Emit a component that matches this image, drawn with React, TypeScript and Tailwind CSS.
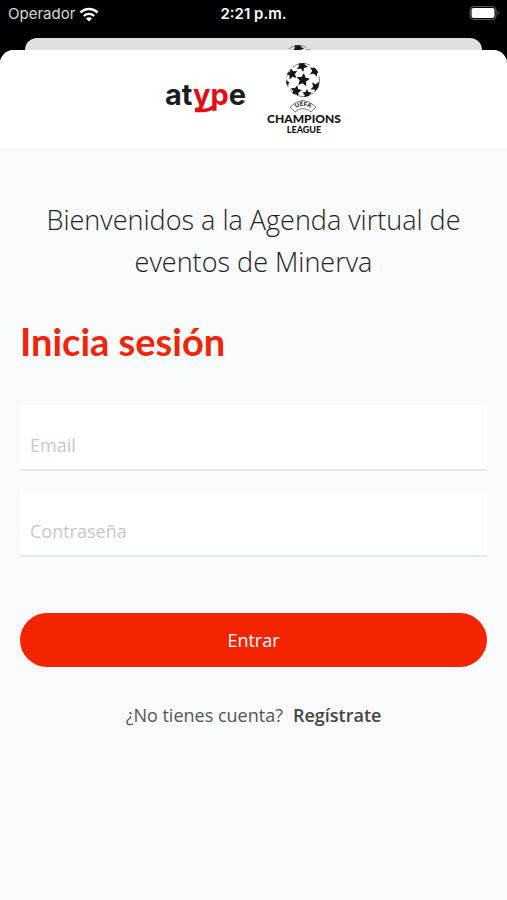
import type { InputHTMLAttributes } from "react";

const STARS: [number, number, number, number][] = [
  [20, 22, 7, 8],
  [19, 8, 6, 25],
  [32, 13, 6, 20],
  [33, 29, 6, 30],
  [24, 36, 5, 0],
  [13, 33, 6, 12],
  [9, 16, 6, -12],
  [4, 25, 3, 0],
];

function starPoints(cx: number, cy: number, r: number, turn: number) {
  return Array.from({ length: 10 }, (_, i) => {
    const radius = i % 2 === 0 ? r : r * 0.48;
    const angle = ((i * 36 - 90 + turn) * Math.PI) / 180;
    return `${(cx + radius * Math.cos(angle)).toFixed(2)},${(cy + radius * Math.sin(angle)).toFixed(2)}`;
  }).join(" ");
}

function StarBall({ clip }: { clip: string }) {
  return (
    <g fill="#161616">
      <clipPath id={clip}>
        <circle cx="20" cy="22" r="17" />
      </clipPath>
      <circle cx="20" cy="22" r="16.5" fill="none" stroke="#777" strokeWidth="0.9" strokeDasharray="8 3" />
      <g clipPath={`url(#${clip})`}>
        {STARS.map(([x, y, r, t]) => (
          <polygon key={`${x}-${y}`} points={starPoints(x, y, r, t)} />
        ))}
      </g>
    </g>
  );
}

function AtypeLogo() {
  return (
    <svg viewBox="0 0 84 50" className="h-[50px] w-[84px] overflow-visible" role="img" aria-label="atype">
      <text x="2" y="34" fontFamily="Inter, sans-serif" fontWeight="700" fontSize="29" fill="#1a1d22">
        at<tspan fill="#e60a14">yp</tspan>e
      </text>
      <path d="M32 39.5h7q8 0 11-4" fill="none" stroke="#e60a14" strokeWidth="3.5" />
    </svg>
  );
}

function ChampionsLogo() {
  return (
    <svg viewBox="0 0 80 80" className="size-20" role="img" aria-label="UEFA Champions League">
      <g transform="translate(18 -1)">
        <StarBall clip="ball-front" />
      </g>
      <path d="M25 48Q38 35 51 48L46 53Q38 46 30 53Z" fill="none" stroke="#444" strokeWidth="0.7" />
      <path id="uefa-arc" d="M27 52Q38 42 49 52" fill="none" />
      <g fill="#161616" fontFamily="Lato, sans-serif" fontWeight="900" textAnchor="middle">
        <text fontSize="6">
          <textPath href="#uefa-arc" startOffset="50%">UEFA</textPath>
        </text>
        <text x="39" y="64" fontSize="12">CHAMPIONS</text>
        <text x="39" y="74" fontSize="9">LEAGUE</text>
      </g>
    </svg>
  );
}

function StatusBar() {
  return (
    <div className="grid h-[38px] grid-cols-3 items-start px-2 pt-[3px] font-[Inter,sans-serif] text-[15px] leading-[22px] text-white">
      <div className="flex items-center gap-1">
        <span className="text-[#d8d8d8]">Operador</span>
        <svg viewBox="0 0 20 15" className="h-[15px] w-5" fill="none" stroke="#fff" strokeWidth="2.6" aria-hidden="true">
          <path d="M1.5 5.5a12 12 0 0 1 17 0" />
          <path d="M4.8 9a7.4 7.4 0 0 1 10.4 0" strokeWidth="2.2" />
          <path d="M10 14.5 7 11.5a4.2 4.2 0 0 1 6 0Z" fill="#fff" stroke="none" />
        </svg>
      </div>
      <span className="text-center font-semibold">2:21 p.m.</span>
      <svg viewBox="0 0 30 16" className="mt-0.5 h-4 w-[30px] justify-self-end" aria-hidden="true">
        <rect x="1" y="1.5" width="26" height="13" rx="4" fill="none" stroke="#555" strokeWidth="1.2" />
        <rect x="2.5" y="3" width="23" height="10" rx="2" fill="#fff" />
        <path d="M28.5 6v4q1.5-.5 1.5-2t-1.5-2" fill="#555" />
      </svg>
    </div>
  );
}

function Field({ label, ...props }: { label: string } & InputHTMLAttributes<HTMLInputElement>) {
  return (
    <input
      {...props}
      aria-label={label}
      placeholder={label}
      className="h-[66px] w-full border-b-2 border-[#e1ebf1] bg-white px-[10px] pt-4 text-lg text-[#444] outline-none placeholder:text-[#c8c8c8]"
    />
  );
}

export default function App() {
  return (
    <div className="flex min-h-screen flex-col bg-black font-['Open_Sans',sans-serif]">
      <StatusBar />
      <div className="mx-[25px] flex h-3 justify-center overflow-hidden rounded-t-[12px] bg-[#e0e0e0]">
        <svg viewBox="0 2 40 8" className="mt-1 ml-[90px] h-2 w-10" aria-hidden="true">
          <StarBall clip="ball-back" />
        </svg>
      </div>
      <div className="flex grow flex-col overflow-hidden rounded-t-[14px] bg-[#f9fafc]">
        <header className="flex h-[98px] items-start justify-center gap-[18px] bg-white pt-[9px]">
          <div className="pt-3">
            <AtypeLogo />
          </div>
          <ChampionsLogo />
        </header>
        <main className="flex flex-col px-5 pt-[51px]">
          <p className="text-center text-[27px] leading-[42px] font-light text-[#222]">
            Bienvenidos a la Agenda virtual de eventos de Minerva
          </p>
          <h1 className="mt-[34px] font-[Lato,sans-serif] text-[38px] leading-[48px] font-bold text-[#f02408]">
            Inicia sesión
          </h1>
          <form className="mt-10 flex flex-col gap-5" onSubmit={(e) => e.preventDefault()}>
            <Field label="Email" type="email" />
            <Field label="Contraseña" type="password" />
            <button type="submit" className="mt-9 h-[54px] rounded-full bg-[#f32400] text-lg text-white">
              Entrar
            </button>
          </form>
          <p className="mt-[34px] flex items-center justify-center gap-[10px] text-lg text-[#555]">
            <span>¿No tienes cuenta?</span>
            <a href="#registro" className="font-semibold text-[#444]">Regístrate</a>
          </p>
        </main>
      </div>
    </div>
  );
}
